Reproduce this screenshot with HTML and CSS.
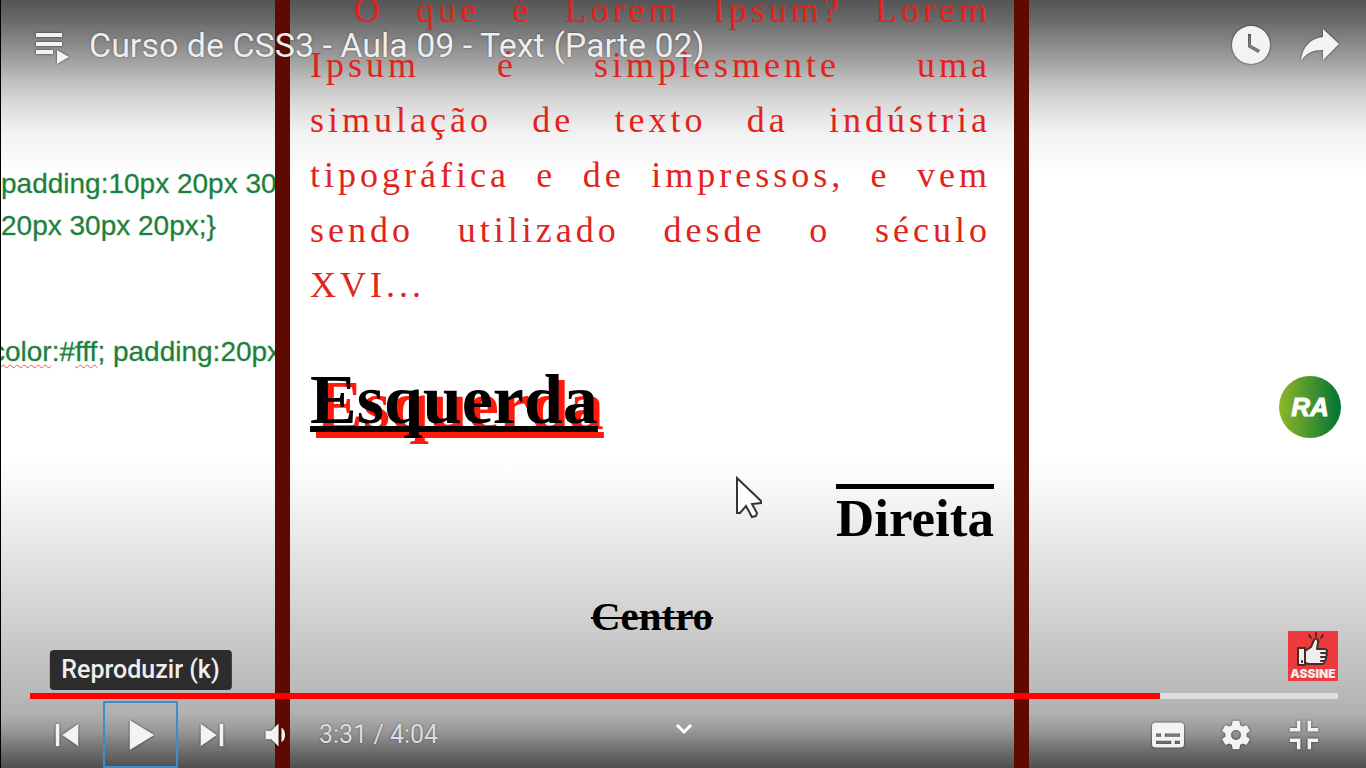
FILE: index.html
```html
<!DOCTYPE html>
<html lang="pt-BR">
<head>
<meta charset="utf-8">
<meta name="viewport" content="width=device-width, initial-scale=1">
<title>Curso de CSS3 - Aula 09 - Text (Parte 02)</title>
<link rel="stylesheet" href="styles.css">
</head>
<body>
<main class="player">
  <section class="frame" aria-label="Vídeo">
    <pre class="editor">padding:10px 20px 30px
20px 30px 20px;}


<span class="scrolled"><span class="typo">color</span>:#<span class="typo">fff</span>; padding:20px</span></pre>
    <article class="sheet">
      <p class="lorem">
        <span class="line first">O que é Lorem Ipsum? Lorem</span>
        <span class="line">Ipsum é simplesmente uma</span>
        <span class="line">simulação de texto da indústria</span>
        <span class="line">tipográfica e de impressos, e vem</span>
        <span class="line">sendo utilizado desde o século</span>
        <span class="line last">XVI...</span>
      </p>
      <h1 class="left">Esquerda</h1>
      <h2 class="right">Direita</h2>
      <h3 class="center">Centro</h3>
      <svg class="cursor" viewBox="0 0 28 44" aria-hidden="true"><path d="M2 2V37L5 37 11 30 17 41 21 40 22 37 17 28 26 27V25Z"/></svg>
    </article>
    <div class="blank"></div>
  </section>

  <div class="scrim"></div>

  <section class="chrome">
    <header class="top">
      <button class="icon-button" type="button" aria-label="Playlist">
        <svg class="icon playlist" viewBox="0 0 34 34"><path d="M1 1h26v4H1zM1 10h26v4H1zM1 18h17v4H1zM22 18v14l12-7z"/></svg>
      </button>
      <a class="title" href="#">Curso de CSS3 - Aula 09 - Text (Parte 02)</a>
      <button class="icon-button" type="button" aria-label="Assistir mais tarde">
        <svg class="icon action" viewBox="0 0 40 40"><path fill-rule="evenodd" d="M20 1a19 19 0 1 0 0 38 19 19 0 1 0 0-38zM17 9h3v11l9 5-2 3-10-6z"/></svg>
      </button>
      <button class="icon-button" type="button" aria-label="Compartilhar">
        <svg class="icon action" viewBox="0 0 40 40"><path d="M24 4 40 19 24 35V25C14 25 7 28 2 36 3 22 12 13 24 12Z"/></svg>
      </button>
    </header>

    <aside class="badges">
      <a class="channel" href="#" aria-label="Canal RA">RA</a>
      <button class="subscribe" type="button">
        <svg class="thumb" viewBox="0 0 50 36" aria-hidden="true">
          <path class="spark" d="M28 2v3M21 4l2 3M35 4l-2 3"/>
          <path class="hand" d="M17 20 23 16 26 9C27 6 31 8 30 12L29 18H36C40 18 40 22 37 22 40 23 39 26 37 26 39 27 38 30 36 30 37 32 36 33 34 33H21L17 32Z"/>
          <path class="hand" d="M10 17H17V34H10Z"/>
          <path class="spark" d="M33 22h4M33 26h4M33 30h3M14 30v1"/>
        </svg>
        <span>ASSINE</span>
      </button>
    </aside>

    <footer class="bottom">
      <input class="seek" type="range" min="0" max="244" value="211" aria-label="Progresso" style="--played:86.4%">
      <div class="controls">
        <div class="group">
          <button class="control" type="button" aria-label="Anterior"><svg class="icon large" viewBox="0 0 36 36"><path d="M12 12h2v12h-2zM15.500 18 24 24V12z"/></svg></button>
          <div class="play-slot">
            <button class="control play" type="button" aria-labelledby="tip"><svg class="icon large" viewBox="0 0 36 36"><path d="M12 10v16l13-8z"/></svg></button>
            <span class="tooltip" id="tip" role="tooltip">Reproduzir (k)</span>
          </div>
          <button class="control" type="button" aria-label="Próximo"><svg class="icon large" viewBox="0 0 36 36"><path d="M12 24 20.500 18 12 12zM22 12h2v12h-2z"/></svg></button>
          <button class="control volume" type="button" aria-label="Volume"><svg class="icon small" viewBox="0 0 36 36"><path d="M8 21h4l5 5V10l-5 5H8zM19 13v10c1.700-.7 2.500-2.800 2.500-5S20.700 13.700 19 13z"/></svg></button>
          <span class="time">3:31 / 4:04</span>
        </div>
        <button class="more" type="button" aria-label="Mais"><svg class="chevron" viewBox="0 0 18 12"><path d="M2 2l7 7 7-7"/></svg></button>
        <div class="group end">
          <button class="control" type="button" aria-label="Legendas"><svg class="icon medium" viewBox="0 0 36 36"><path fill-rule="evenodd" d="M11 11h14a2 2 0 0 1 2 2v10a2 2 0 0 1-2 2H11a2 2 0 0 1-2-2V13a2 2 0 0 1 2-2zM11.300 17.200v1.800h2.800v-1.800zM16.200 17.200v1.800h8.500v-1.800zM11.300 21.200V23h8.500v-1.800zM21.800 21.200V23h2.900v-1.800z"/></svg></button>
          <button class="control" type="button" aria-label="Configurações"><svg class="icon medium" viewBox="0 0 36 36"><path fill-rule="evenodd" d="m23.94 18.780c.03-.25.05-.51.05-.78 0-.27-.02-.52-.05-.78l1.680-1.320c.15-.12.19-.33.09-.51l-1.600-2.760c-.09-.17-.31-.24-.48-.17l-1.990.8c-.41-.32-.86-.58-1.350-.78l-.3-2.120c-.02-.19-.19-.33-.39-.33h-3.200c-.2 0-.36.14-.39.33l-.3 2.120c-.48.2-.93.47-1.350.78l-1.990-.8c-.18-.07-.39 0-.48.17l-1.600 2.760c-.1.17-.05.39.09.51l1.680 1.320c-.03.25-.05.52-.05.78s.02.52.05.78l-1.680 1.320c-.15.12-.19.33-.09.51l1.600 2.760c.09.17.31.24.48.17l1.990-.8c.41.32.86.58 1.350.78l.3 2.120c.02.19.19.33.39.33h3.200c.2 0 .36-.14.39-.33l.3-2.120c.48-.2.93-.47 1.350-.78l1.990.8c.18.07.39 0 .48-.17l1.600-2.760c.09-.17.05-.39-.09-.51zM18 20.800a2.800 2.800 0 1 1 0-5.600 2.800 2.800 0 0 1 0 5.600z"/></svg></button>
          <button class="control" type="button" aria-label="Sair da tela cheia"><svg class="icon medium" viewBox="0 0 36 36"><path d="M14 14h-4v2h6v-6h-2zM22 14v-4h-2v6h6v-2zM20 26h2v-4h4v-2h-6zM10 22h4v4h2v-6h-6z"/></svg></button>
        </div>
      </div>
    </footer>
  </section>
</main>
</body>
</html>
```
FILE: styles.css
```css
* { box-sizing: border-box; }

body {
  margin: 0;
  background: #000;
  font-family: Roboto, "Liberation Sans", sans-serif;
}

button {
  margin: 0;
  padding: 0;
  border: 0;
  background: none;
  color: inherit;
  font: inherit;
  cursor: pointer;
}

svg { display: block; }

/* The picture, its shading and the controls share one grid cell. */
.player {
  display: grid;
  grid-template-columns: minmax(0, 1fr);
  height: 100vh;
  overflow: hidden;
}

.frame,
.scrim,
.chrome {
  grid-area: 1 / 1;
  min-height: 0;
}

/* Video picture */
.frame {
  display: grid;
  grid-template-columns: minmax(0, 274fr) minmax(0, 754fr) minmax(0, 337fr);
  background: #fff;
  border-left: 1px solid #000;
}

.editor {
  margin: 0;
  padding-top: 163px;
  overflow: hidden;
  color: #1c7f3c;
  font: 28px/42px "Liberation Sans", Arial, sans-serif;
  -webkit-text-stroke: 1px rgba(28, 127, 60, 0.3);
}

.scrolled { margin-left: -10px; }

.typo {
  text-decoration: underline wavy #f55548 1px;
  text-decoration-skip-ink: none;
  text-underline-offset: 3px;
}

.sheet {
  position: relative;
  padding: 0 20px;
  border: solid #5e0a00;
  border-width: 0 15px;
  color: #000;
  font-family: "Liberation Serif", "Times New Roman", serif;
}

.lorem {
  margin: -17px 0 47px;
  padding-right: 3px;
  color: #e2231b;
  font-size: 36px;
  line-height: 55px;
  letter-spacing: 4px;
}

.line {
  display: block;
  text-align-last: justify;
}

.first { text-indent: 44px; }
.last { text-align-last: left; }

.left,
.right,
.center { margin: 0; line-height: normal; }

.left {
  font-size: 70px;
  text-decoration: underline 6px;
  text-decoration-skip-ink: none;
  text-shadow: 6px 6px 0 #ff1a0c;
}

.right {
  margin-top: 48px;
  font-size: 53px;
  text-align: right;
  text-decoration: overline 5px;
}

.center {
  margin-top: 44px;
  font-size: 41px;
  text-align: center;
  text-decoration: line-through 2px;
}

.cursor {
  position: absolute;
  top: 476px;
  left: 61.5%;
  width: 28px;
  height: 44px;
  fill: #fff;
  stroke: #333;
  stroke-width: 2;
}

.scrim {
  background:
    linear-gradient(to bottom,
      rgba(0, 0, 0, 0.67) 0,
      rgba(0, 0, 0, 0.59) 20px,
      rgba(0, 0, 0, 0.47) 42px,
      rgba(0, 0, 0, 0.34) 66px,
      rgba(0, 0, 0, 0.24) 83px,
      rgba(0, 0, 0, 0.15) 103px,
      rgba(0, 0, 0, 0.05) 133px,
      rgba(0, 0, 0, 0) 178px),
    linear-gradient(to top,
      rgba(0, 0, 0, 0.69) 0,
      rgba(0, 0, 0, 0.55) 20px,
      rgba(0, 0, 0, 0.41) 36px,
      rgba(0, 0, 0, 0.31) 54px,
      rgba(0, 0, 0, 0.27) 80px,
      rgba(0, 0, 0, 0.15) 178px,
      rgba(0, 0, 0, 0.05) 262px,
      rgba(0, 0, 0, 0) 310px);
}

/* Controls */
.chrome {
  z-index: 1;
  display: flex;
  flex-direction: column;
  color: #f3f3f3;
}

.icon {
  fill: #f3f3f3;
  filter: drop-shadow(0 0 1px rgba(0, 0, 0, 0.7));
}

.top {
  display: flex;
  align-items: center;
  gap: 28px;
  height: 90px;
  padding: 0 27px 0 35px;
}

.playlist {
  width: 34px;
  height: 34px;
  margin-top: 8px;
}

.action {
  width: 40px;
  height: 40px;
}

.title {
  flex: 1;
  margin-left: -8px;
  color: #eee;
  font-size: 34px;
  line-height: 40px;
  text-decoration: none;
  text-shadow: 0 0 2px rgba(0, 0, 0, 0.5);
}

.badges {
  display: flex;
  flex: 1;
  flex-direction: column;
  align-items: flex-end;
  justify-content: flex-end;
  gap: 193px;
  padding: 0 28px 12px 0;
}

.channel {
  width: 62px;
  height: 62px;
  margin-right: -3px;
  border-radius: 50%;
  background: linear-gradient(to right, #8fb827, #007236);
  color: #fff;
  font: italic bold 26px/62px "Liberation Sans Narrow", "Liberation Sans", sans-serif;
  text-align: center;
  text-decoration: none;
  -webkit-text-stroke: 1px #fff;
}

.subscribe {
  display: flex;
  flex-direction: column;
  align-items: center;
  width: 50px;
  height: 50px;
  background: #ee3a3c;
  color: #f3eeee;
  font: 900 12px/14px Inter, sans-serif;
}

.thumb { width: 50px; height: 36px; }
.hand { fill: #f0eeee; stroke: #472b2c; stroke-width: 2; stroke-linejoin: round; }
.spark { fill: none; stroke: #472b2c; stroke-width: 2; stroke-linecap: round; }

.bottom { padding: 0 28px 0 30px; }

.seek {
  display: block;
  width: 100%;
  height: 6px;
  margin: 0 0 2px;
  appearance: none;
  background: linear-gradient(to right, #f00 var(--played), #dedede var(--played));
}

.seek::-webkit-slider-thumb {
  width: 0;
  height: 0;
  appearance: none;
}

.controls {
  display: grid;
  grid-template-columns: 1fr auto 1fr;
  align-items: start;
}

.group { display: flex; align-items: center; }
.end { justify-content: flex-end; }

.control {
  display: flex;
  align-items: center;
  justify-content: center;
  width: 68px;
  height: 67px;
}

.control:first-child { width: 73px; }
.end .control:first-child { width: 68px; }

.play-slot { position: relative; }

.play-slot .play {
  width: 75px;
  border: 2px solid #3e8cc8;
}

.large { flex: none; width: 68px; height: 68px; }
.medium { flex: none; width: 64px; height: 64px; }
.small { flex: none; width: 52px; height: 52px; }

.tooltip {
  position: absolute;
  bottom: calc(100% + 11px);
  left: 50%;
  padding: 0 12px;
  border-radius: 4px;
  background: #2c2c2c;
  color: #eee;
  font-size: 25px;
  font-weight: 500;
  line-height: 40px;
  white-space: nowrap;
  transform: translateX(-50%);
}

.time {
  margin-left: 5px;
  color: #ddd;
  font-size: 25px;
  text-shadow: 0 0 2px rgba(0, 0, 0, 0.5);
}

.more { padding: 22px 8px; }

.chevron {
  width: 18px;
  height: 12px;
  fill: none;
  stroke: #fff;
  stroke-width: 3;
}
```
